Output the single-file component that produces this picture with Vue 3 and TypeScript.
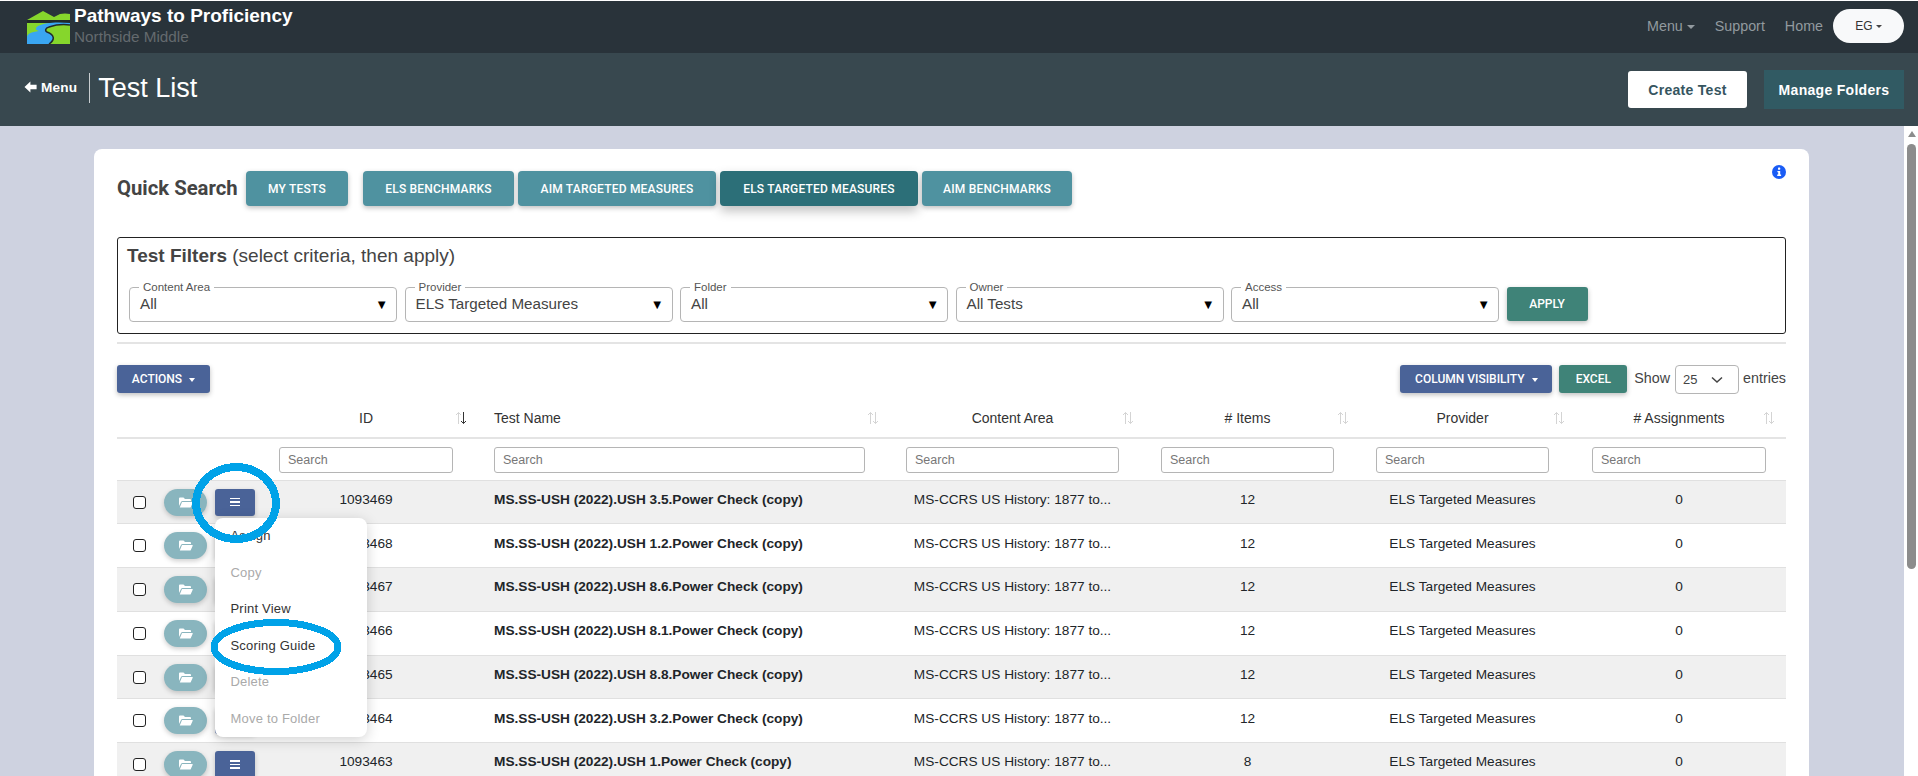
<script setup lang="ts">
interface Col { title: string; width: number; input: number; align: string; active?: boolean }
const cols: Col[] = [
  { title: 'ID', width: 215, input: 174, align: 'center', active: true },
  { title: 'Test Name', width: 412, input: 371, align: 'left' },
  { title: 'Content Area', width: 255, input: 213, align: 'center' },
  { title: '# Items', width: 215, input: 173, align: 'center' },
  { title: 'Provider', width: 216, input: 173, align: 'center' },
  { title: '# Assignments', width: 210, input: 174, align: 'center' },
]
const rows = [
  { id: '1093469', name: 'MS.SS-USH (2022).USH 3.5.Power Check (copy)', items: 12 },
  { id: '1093468', name: 'MS.SS-USH (2022).USH 1.2.Power Check (copy)', items: 12 },
  { id: '1093467', name: 'MS.SS-USH (2022).USH 8.6.Power Check (copy)', items: 12 },
  { id: '1093466', name: 'MS.SS-USH (2022).USH 8.1.Power Check (copy)', items: 12 },
  { id: '1093465', name: 'MS.SS-USH (2022).USH 8.8.Power Check (copy)', items: 12 },
  { id: '1093464', name: 'MS.SS-USH (2022).USH 3.2.Power Check (copy)', items: 12 },
  { id: '1093463', name: 'MS.SS-USH (2022).USH 1.Power Check (copy)', items: 8 },
]
const filters = [
  { label: 'Content Area', value: 'All' },
  { label: 'Provider', value: 'ELS Targeted Measures' },
  { label: 'Folder', value: 'All' },
  { label: 'Owner', value: 'All Tests' },
  { label: 'Access', value: 'All' },
]
const menu = [
  { label: 'Assign', off: false },
  { label: 'Copy', off: true },
  { label: 'Print View', off: false },
  { label: 'Scoring Guide', off: false },
  { label: 'Delete', off: true },
  { label: 'Move to Folder', off: true },
]
</script>

<template>
  <div class="page">
    <header class="topbar">
      <div class="brand">
        <svg class="logo" width="43" height="33" viewBox="0 0 43 33">
          <path d="M0 9 L16 0 L27 6 L33 3 Q38 2 43 3 V9Z" fill="#86d62c" />
          <rect y="9" width="43" height="3" fill="#222a2a" />
          <path d="M0 12 H43 V33 H0Z" fill="#86d62c" />
          <path d="M43 12 C32 11 18 11 11 15 C8 17 8 19 12 20 C4 21 0 23 0 26 V33 H22 C28 29 28 24 20 21 C18 20 18 17 22 16 C28 14 36 13 43 14Z" fill="#3aa6f2" />
          <path d="M43 14 C36 13 28 14 22 16 C18 17 18 20 20 21 C28 24 28 29 22 33" fill="none" stroke="#222a2a" stroke-width="1.500" />
        </svg>
        <div class="brand-text">
          <div class="brand-name">Pathways to Proficiency</div>
          <div class="brand-school">Northside Middle</div>
        </div>
      </div>
      <nav class="topnav">
        <span class="nav-link">Menu<i class="caret"></i></span>
        <span class="nav-link">Support</span>
        <span class="nav-link">Home</span>
        <span class="user">EG<i class="caret small"></i></span>
      </nav>
    </header>

    <div class="subbar">
      <div class="crumb">
        <svg class="back" width="13" height="12" viewBox="0 0 13 12"><path d="M6.400 0.500 L0.500 6 L6.400 11.500 V8.200 H12.600 V3.800 H6.400Z" fill="#fff" /></svg>
        <span class="crumb-menu">Menu</span>
        <span class="crumb-div"></span>
        <h1 class="crumb-title">Test List</h1>
      </div>
      <div class="sub-actions">
        <button class="create">Create Test</button>
        <button class="manage">Manage Folders</button>
      </div>
    </div>

    <div class="body-row">
      <main class="content">
        <section class="card">
          <svg class="info" width="14" height="14" viewBox="0 0 14 14">
            <circle cx="7" cy="7" r="7" fill="#1a5cf5" />
            <rect x="6" y="2.600" width="2.200" height="2.200" rx=".6" fill="#fff" />
            <path d="M5.400 6h2.800v3.600h.9v1.300H5.200V9.600h1V7.300h-.8z" fill="#fff" />
          </svg>

          <div class="quick">
            <h2 class="quick-title">Quick Search</h2>
            <button class="qbtn mine">MY TESTS</button>
            <div class="qgroup">
              <button class="qbtn els-b">ELS BENCHMARKS</button>
              <button class="qbtn aim-t">AIM TARGETED MEASURES</button>
              <button class="qbtn active els-t">ELS TARGETED MEASURES</button>
              <button class="qbtn aim-b">AIM BENCHMARKS</button>
            </div>
          </div>

          <div class="filters">
            <div class="filters-title"><b>Test Filters</b> (select criteria, then apply)</div>
            <div class="filter-row">
              <fieldset v-for="f in filters" :key="f.label" class="field">
                <legend>{{ f.label }}</legend>
                <span class="field-value">{{ f.value }}</span>
                <span class="field-arrow">▼</span>
              </fieldset>
              <button class="apply">APPLY</button>
            </div>
          </div>
          <hr class="rule" />

          <div class="toolbar">
            <button class="tbtn blue actions">ACTIONS<i class="caret white"></i></button>
            <div class="tools-right">
              <button class="tbtn blue colvis">COLUMN VISIBILITY<i class="caret white"></i></button>
              <button class="tbtn green">EXCEL</button>
              <span class="show">Show</span>
              <span class="sel">25
                <svg width="14" height="8" viewBox="0 0 14 8"><path d="M2 1.500 L7 6 L12 1.500" fill="none" stroke="#444" stroke-width="1.500" /></svg>
              </span>
              <span class="show">entries</span>
            </div>
          </div>

          <table class="grid">
            <colgroup>
              <col style="width: 146px" />
              <col v-for="c in cols" :key="c.title" :style="{ width: c.width + 'px' }" />
            </colgroup>
            <thead>
              <tr class="head">
                <th></th>
                <th v-for="c in cols" :key="c.title">
                  <div class="head-cell" :style="{ width: c.input + 'px', textAlign: c.align }">{{ c.title }}</div>
                  <svg class="sort" width="12" height="14" viewBox="0 0 12 14">
                    <path d="M3.500 13V1.500M1 4l2.500-2.500L6 4" fill="none" stroke="#d4d4d4" />
                    <path d="M8.500 1v11.500M6 10l2.500 2.500L11 10" fill="none" :stroke="c.active ? '#333' : '#d4d4d4'" />
                  </svg>
                </th>
              </tr>
              <tr class="searches">
                <th></th>
                <th v-for="c in cols" :key="c.title">
                  <input class="search" placeholder="Search" :style="{ width: c.input + 'px' }" />
                </th>
              </tr>
            </thead>
            <tbody>
              <tr v-for="r in rows" :key="r.id" class="row">
                <td class="tools">
                  <span class="box"></span>
                  <span class="folder">
                    <svg width="14" height="11" viewBox="0 0 14 11"><path d="M0 1.500Q0 .5 1 .5H4.500L6 2H11Q12 2 12 3V4H3.500Q2.500 4 2 5L0 9Z M3 5H13.300Q14 5 13.700 5.800L11.800 10Q11.500 10.500 11 10.500H.8Z" fill="#fff" /></svg>
                  </span>
                  <span class="burger"><i></i><i></i><i></i></span>
                </td>
                <td><div class="cell center" style="width: 174px">{{ r.id }}</div></td>
                <td class="name">{{ r.name }}</td>
                <td><div class="cell center" style="width: 213px">MS-CCRS US History: 1877 to...</div></td>
                <td><div class="cell center" style="width: 173px">{{ r.items }}</div></td>
                <td><div class="cell center" style="width: 173px">ELS Targeted Measures</div></td>
                <td><div class="cell center" style="width: 174px">0</div></td>
              </tr>
            </tbody>
          </table>

          <ul class="menu">
            <li v-for="m in menu" :key="m.label" :class="{ off: m.off }">{{ m.label }}</li>
          </ul>
        </section>

        <svg class="marks" width="1904" height="650" viewBox="0 126 1904 650" shape-rendering="crispEdges">
          <ellipse cx="236" cy="503" rx="40" ry="36" fill="none" stroke="#00a2e8" stroke-width="8" />
          <ellipse cx="276" cy="647" rx="62" ry="24.500" fill="none" stroke="#00a2e8" stroke-width="7" />
        </svg>
      </main>

      <aside class="scroll">
        <i class="scroll-up"></i>
        <i class="scroll-thumb"></i>
      </aside>
    </div>
  </div>
</template>

<style>
html, body { margin: 0; overflow: hidden; }
</style>

<style scoped>
.page { width: 1918px; height: 776px; overflow: hidden; font-family: "Liberation Sans", Arial, sans-serif; display: flex; flex-direction: column; color: #212529; }
button { font-family: inherit; border: 0; cursor: pointer; }
.topbar { height: 52px; flex: none; margin-top: 1px; background: #29333a; display: flex; justify-content: space-between; padding: 0 14px 0 27px; box-sizing: border-box; }
.brand { display: flex; align-items: flex-start; gap: 4px; }
.logo { margin-top: 10px; }
.brand-text { padding-top: 4px; }
.brand-name { font-size: 19px; font-weight: 700; line-height: 21px; color: #fff; }
.brand-school { font-size: 15.300px; line-height: 20px; color: #646a6e; margin-top: 1px; }
.topnav { display: flex; align-items: center; height: 52px; margin-top: -1px; }
.nav-link { font-size: 14.300px; color: #929a9f; margin-right: 20px; }
.nav-link:nth-child(3) { margin-right: 10px; }
.caret { display: inline-block; margin-left: 4px; vertical-align: 2px; border-left: 4px solid transparent; border-right: 4px solid transparent; border-top: 4px solid #929a9f; }
.caret.small { border-width: 3.500px 3.500px 0; border-top-color: #444; margin-left: 3px; }
.caret.white { border-top-color: #fff; border-width: 4px 3.500px 0; margin-left: 7px; vertical-align: 1px; }
.user { width: 71px; height: 34px; border-radius: 17px; background: #f8f9fa; font-size: 12px; color: #333; display: flex; align-items: center; justify-content: center; }
.subbar { height: 73px; flex: none; background: #38484f; display: flex; justify-content: space-between; padding: 0 14px 0 24px; box-sizing: border-box; }
.crumb { display: flex; align-items: center; height: 60px; margin-top: 5px; }
.back { margin-top: -2px; }
.crumb-menu { color: #fff; font-weight: 700; font-size: 13.600px; margin-left: 4px; margin-top: -2px; letter-spacing: .2px; }
.crumb-div { width: 1px; height: 30px; background: #c8cdd0; margin: 0 8px 0 12px; }
.crumb-title { margin: 0; font-size: 27px; font-weight: 400; color: #fff; }
.sub-actions { display: flex; align-items: flex-start; gap: 17px; padding-top: 17px; }
.create { width: 119px; height: 37px; margin-top: 1px; background: #fff; border-radius: 3px; font-size: 14px; font-weight: 700; color: #36555f; letter-spacing: .3px; }
.manage { width: 140px; height: 39px; background: #315a63; color: #fff; font-size: 14px; font-weight: 700; letter-spacing: .3px; }
.body-row { flex: 1; display: flex; min-height: 0; }
.content { width: 1904px; flex: none; background: #ced2e0; padding: 23px 94px 0; box-sizing: border-box; position: relative; overflow: hidden; }
.scroll { width: 14px; flex: none; background: #fff; display: flex; flex-direction: column; align-items: center; padding-left: 1px; box-sizing: border-box; }
.scroll-up { margin-top: 5px; border-left: 4.500px solid transparent; border-right: 4.500px solid transparent; border-bottom: 6px solid #8c8c8c; }
.scroll-thumb { width: 9px; height: 425px; margin-top: 7px; border-radius: 5px; background: #8c8c8c; }
.card { width: 1715px; height: 640px; background: #fff; border-radius: 8px 8px 0 0; padding: 22px 23px 0; box-sizing: border-box; position: relative; }
.info { position: absolute; top: 16px; right: 23px; }
.quick { display: flex; align-items: center; height: 35px; }
.quick-title { margin: -2px 8px 0 0; width: 121px; white-space: nowrap; font: 700 20.300px Roboto, sans-serif; color: #444; }
.qgroup { display: flex; gap: 4px; margin-left: 15px; }
.qbtn { height: 35px; background: #4f92a0; color: #fff; font: 500 12px Roboto, sans-serif; border-radius: 4px; box-shadow: 0 2px 5px rgba(0,0,0,.25); padding: 0; letter-spacing: .2px; }
.mine { width: 102px; }
.els-b { width: 151px; }
.aim-t { width: 198px; }
.els-t { width: 198px; }
.aim-b { width: 150px; }
.qbtn.active { background: #2c6f78; box-shadow: 0 5px 11px rgba(0,0,0,.25); }
.filters { margin-top: 31px; height: 97px; width: 1669px; box-sizing: border-box; border: 1px solid #222; border-radius: 3px; padding: 8px 10px 0; }
.filters-title { font-size: 19px; line-height: 21px; color: #444; margin: -1px 0 0 -1px; }
.filters-title b { font-weight: 700; }
.filter-row { display: flex; gap: 7.500px; margin-top: 16px; align-items: flex-end; margin-left: 1px; }
.field { margin: 0; padding: 0 8px 0 10px; width: 268px; height: 40px; box-sizing: border-box; border: 1px solid #b5b5b5; border-radius: 4px; display: flex; align-items: center; justify-content: space-between; min-width: 0; }
.field legend { font-size: 11.500px; line-height: 10px; color: #555; padding: 0 4px; margin-left: -1px; }
.field-value { font-size: 15.200px; line-height: 20px; color: #444; margin-top: -6px; }
.field-arrow { font-size: 13px; color: #000; margin-top: -4px; }
.apply { width: 81px; height: 34px; margin-bottom: 1px; background: #3f8378; color: #fff; font: 500 12px Roboto, sans-serif; border-radius: 3px; box-shadow: 0 2px 5px rgba(0,0,0,.25); }
.rule { margin: 8px 0 0; width: 1669px; border: 0; border-top: 2px solid #e4e4e4; }
.toolbar { display: flex; justify-content: space-between; width: 1669px; margin-top: 21px; height: 29px; }
.tbtn { height: 28px; color: #fff; font: 500 12px Roboto, sans-serif; border-radius: 3px; box-shadow: 0 2px 5px rgba(0,0,0,.25); padding: 0; }
.blue { background: #4a6398; }
.green { background: #3f8378; width: 68px; }
.actions { width: 93px; }
.colvis { width: 152px; }
.tools-right { display: flex; align-items: flex-start; gap: 7px; }
.show { font-size: 14.300px; line-height: 26px; color: #444; }
.sel { width: 64px; height: 29px; box-sizing: border-box; border: 1px solid #b5b5b5; border-radius: 4px; font-size: 13px; color: #444; display: flex; align-items: center; justify-content: space-between; padding: 0 14px 0 7px; margin: 0 -3px 0 -2px; }
.grid { table-layout: fixed; border-collapse: collapse; width: 1669px; margin-top: 9px; }
.head { height: 35px; border-bottom: 2px solid #e4e4e4; }
.head th { padding: 0 0 4px 16px; font-weight: 400; font-size: 14px; position: relative; color: #333; }
.head th:first-child, .searches th:first-child { padding: 0; }
.head-cell { white-space: nowrap; }
.sort { position: absolute; right: 11px; top: 8px; }
.searches { height: 42px; border-bottom: 1px solid #e0e0e0; }
.searches th { padding: 0 0 0 16px; }
.search { display: block; height: 26px; box-sizing: border-box; border: 1px solid #b5b5b5; border-radius: 3px; font: 400 12.500px "Liberation Sans", Arial, sans-serif; padding: 0 8px; margin-top: 1px; color: #666; }
.search::placeholder { color: #777; opacity: 1; }
.row { height: 43.750px; border-bottom: 1px solid #e0e0e0; }
.row:nth-child(odd) { background: #f0f0f0; }
.row td { padding: 0 0 0 16px; font-size: 13.660px; color: #212529; white-space: nowrap; }
.row td.tools { padding: 0; }
.cell { margin-top: -5px; }
.row td.name { padding-bottom: 5px; font-weight: 700; }
.center { text-align: center; }
.tools { position: relative; }
.box { position: absolute; left: 16px; top: 15px; width: 13px; height: 13px; box-sizing: border-box; border: 1.500px solid #222; border-radius: 3px; background: #fff; }
.folder { position: absolute; left: 47px; top: 8px; width: 43px; height: 27px; border-radius: 14px; background: #89b5be; box-shadow: 0 2px 5px rgba(0,0,0,.2); display: flex; align-items: center; justify-content: center; }
.burger { position: absolute; left: 98px; top: 8px; width: 40px; height: 27px; border-radius: 3px; background: #4a6398; box-shadow: 0 2px 5px rgba(0,0,0,.2); display: flex; flex-direction: column; align-items: center; justify-content: center; gap: 2px; }
.burger i { display: block; width: 10px; height: 1.500px; background: #fff; }
.menu { list-style: none; margin: 0; padding: 0; position: absolute; left: 121px; top: 369px; width: 152px; height: 219px; background: #fff; border-radius: 8px; box-shadow: 0 3px 14px rgba(0,0,0,.18); display: flex; flex-direction: column; justify-content: space-around; padding: 0 0 0 15.500px; box-sizing: border-box; }
.menu li { font-size: 13px; line-height: 36px; letter-spacing: .2px; color: #333; }
.menu li.off { color: #aaa; }
.marks { position: absolute; left: 0; top: 0; pointer-events: none; }
</style>
